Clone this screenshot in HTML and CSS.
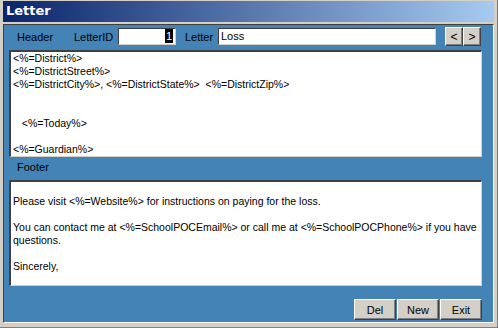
FILE: index.html
```html
<!DOCTYPE html>
<html lang="en">
<head>
    <meta charset="UTF-8">
    <title>Letter</title>
    <link rel="stylesheet" href="styles.css">
</head>
<body>

    <div class="window">
        <!-- Title bar -->
        <div class="titlebar">Letter</div>

        <div class="client">
            <!-- Header row -->
            <div class="header-row">
                <span class="label label-header">Header</span>
                <span class="label label-id">LetterID</span>
                <div class="field field-id"><span class="sel">1</span></div>
                <span class="label label-letter">Letter</span>
                <div class="field field-name">Loss</div>
                <div class="nav">
                    <button class="btn nav-btn">&lt;</button>
                    <button class="btn nav-btn">&gt;</button>
                </div>
            </div>

            <!-- Header text -->
            <div class="memo memo-header">&lt;%=District%&gt;
&lt;%=DistrictStreet%&gt;
&lt;%=DistrictCity%&gt;, &lt;%=DistrictState%&gt;  &lt;%=DistrictZip%&gt;


   &lt;%=Today%&gt;

&lt;%=Guardian%&gt;</div>

            <div class="label label-footer">Footer</div>

            <!-- Footer text -->
            <div class="memo memo-footer">
Please visit &lt;%=Website%&gt; for instructions on paying for the loss.

You can contact me at &lt;%=SchoolPOCEmail%&gt; or call me at &lt;%=SchoolPOCPhone%&gt; if you have
questions.

Sincerely,</div>

            <div class="actions">
                <button class="btn act-btn">Del</button>
                <button class="btn act-btn">New</button>
                <button class="btn act-btn">Exit</button>
            </div>
        </div>
    </div>

</body>
</html>
```

FILE: styles.css
```css
/* General */
body {
    margin: 0;
    font-family: "Liberation Sans", Arial, sans-serif;
    font-size: 11px;
    color: #000;
}

.window {
    width: 498px;
    height: 328px;
    box-sizing: border-box;
    background: #d4d0c8;
    padding: 1px 3px 3px 3px;
    border-right: 1px solid #808080;
    border-bottom: 1px solid #808080;
}

/* Title bar */
.titlebar {
    height: 21px;
    line-height: 20px;
    padding-left: 3px;
    color: #fff;
    font-weight: bold;
    font-size: 13px;
    font-family: "DejaVu Sans", sans-serif;
    background: linear-gradient(to right, #0a246a, #a6caf0);
}

/* Blue client area */
.client {
    margin-top: 2px;
    height: 299px;
    box-sizing: border-box;
    background: #4383b5;
    border-top: 1px solid #404040;
    border-left: 1px solid #404040;
    border-right: 1px solid #fff;
    border-bottom: 1px solid #fff;
    padding: 2px 8px 0 5px;
}

/* Header row */
.header-row {
    display: flex;
    align-items: center;
    height: 19px;
}

.label {
    white-space: nowrap;
}

.label-header { margin-left: 8px; width: 57px; }
.label-id { width: 44px; }
.label-letter { margin-left: 9px; width: 33px; }

.field {
    height: 17px;
    box-sizing: border-box;
    background: #fff;
    border-top: 1px solid #404040;
    border-left: 1px solid #404040;
    border-right: 1px solid #d4d0c8;
    border-bottom: 1px solid #d4d0c8;
    line-height: 15px;
    padding: 0 2px;
}

.field-id {
    width: 58px;
    text-align: right;
}

.sel {
    display: inline-block;
    background: #000;
    color: #fff;
    padding: 0 1px;
    line-height: 14px;
    vertical-align: top;
}

.field-name {
    width: 218px;
}

.nav {
    display: flex;
    margin-left: 9px;
}

/* Buttons */
.btn {
    font-family: "Liberation Sans", Arial, sans-serif;
    font-size: 11px;
    background: #d4d0c8;
    color: #000;
    box-sizing: border-box;
    padding: 0;
    border-top: 1px solid #fff;
    border-left: 1px solid #fff;
    border-right: 1px solid #404040;
    border-bottom: 1px solid #404040;
    box-shadow: inset -1px -1px 0 #808080;
}

.nav-btn {
    width: 18px;
    height: 19px;
    font-size: 12px;
}

/* Memo boxes */
.memo {
    margin-top: 4px;
    width: 473px;
    height: 107px;
    box-sizing: border-box;
    background: #fff;
    border-top: 2px solid #404040;
    border-left: 2px solid #404040;
    border-right: 1px solid #d4d0c8;
    border-bottom: 1px solid #d4d0c8;
    padding: 0 1px 1px 2px;
    font-size: 10.5px;
    white-space: pre;
    line-height: 13px;
    overflow: hidden;
}

.label-footer {
    margin-left: 8px;
    height: 23px;
    line-height: 20px;
}

.memo-footer {
    margin-top: 0;
    height: 106px;
}

/* Bottom buttons */
.actions {
    display: flex;
    justify-content: flex-end;
    margin-top: 13px;
    width: 473px;
    gap: 1px;
}

.act-btn {
    width: 42px;
    height: 21px;
}
```
